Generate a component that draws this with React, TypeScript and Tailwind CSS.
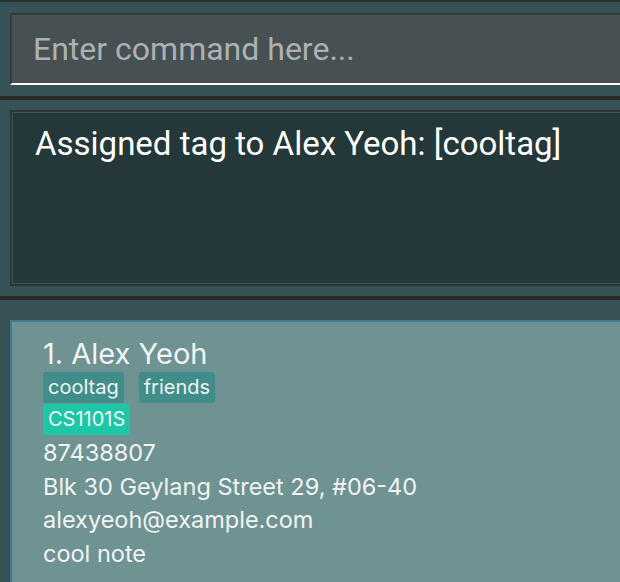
import React from 'react';

interface Person {
  index: number;
  name: string;
  tags: string[];
  modules: string[];
  phone: string;
  address: string;
  email: string;
  note: string;
}

const PEOPLE: Person[] = [
  {
    index: 1,
    name: 'Alex Yeoh',
    tags: ['cooltag', 'friends'],
    modules: ['CS1101S'],
    phone: '87438807',
    address: 'Blk 30 Geylang Street 29, #06-40',
    email: 'alexyeoh@example.com',
    note: 'cool note',
  },
];

function PersonCard({ person }: { person: Person }) {
  return (
    <div className="w-[640px] h-[300px] bg-[#6f9293] border-t-2 border-l-2 border-[#3f7c90] pl-[31px] pt-[14px] text-[#f2f4f4] font-['Inter',sans-serif]">
      <div className="text-[29px] leading-[36px]">
        {person.index}. {person.name}
      </div>
      <div className="flex flex-wrap gap-x-[15px] w-[200px]">
        {person.tags.map((t) => (
          <span key={t} className="bg-[#3f8e89] rounded-[3px] px-[5px] h-[31px] leading-[31px] text-[20px]">
            {t}
          </span>
        ))}
      </div>
      <div className="flex mt-[1px]">
        {person.modules.map((m) => (
          <span key={m} className="bg-[#1cc7a8] rounded-[3px] px-[5px] h-[31px] leading-[31px] text-[20px]">
            {m}
          </span>
        ))}
      </div>
      <div className="text-[23.5px] leading-[33.5px] mt-[1px]">
        <div>{person.phone}</div>
        <div>{person.address}</div>
        <div>{person.email}</div>
        <div>{person.note}</div>
      </div>
    </div>
  );
}

export default function App() {
  return (
    <div className="w-[620px] h-[582px] overflow-hidden bg-[#375257] font-['Roboto',sans-serif]">
      <div className="h-[2px] bg-[#2c2f30]" />
      <div className="pt-[11px] pb-[11px] pl-[10px]">
        <div className="w-[640px] h-[72px] bg-[#475052] border-t-2 border-l-2 border-[#363a3b] border-b-2 border-b-white flex items-center pl-[21px]">
          <input
            className="bg-transparent outline-none text-[32px] text-white placeholder:text-[#aeb1b1] w-full"
            placeholder="Enter command here..."
          />
        </div>
      </div>
      <div className="h-[4px] bg-[#2b2b2b]" />
      <div className="pt-[10px] pb-[10px] pl-[10px]">
        <div className="w-[640px] h-[176px] bg-[#2f3536] p-[2px]">
          <div className="h-full bg-[#243739] border border-[#3a5457] pl-[22px] pt-[11px]">
            <div className="text-[33px] leading-[40px] text-white">Assigned tag to Alex Yeoh: [cooltag]</div>
          </div>
        </div>
      </div>
      <div className="h-[4px] bg-[#2b2b2b]" />
      <div className="pt-[20px] pl-[10px]">
        {PEOPLE.map((p) => (
          <PersonCard key={p.index} person={p} />
        ))}
      </div>
    </div>
  );
}
